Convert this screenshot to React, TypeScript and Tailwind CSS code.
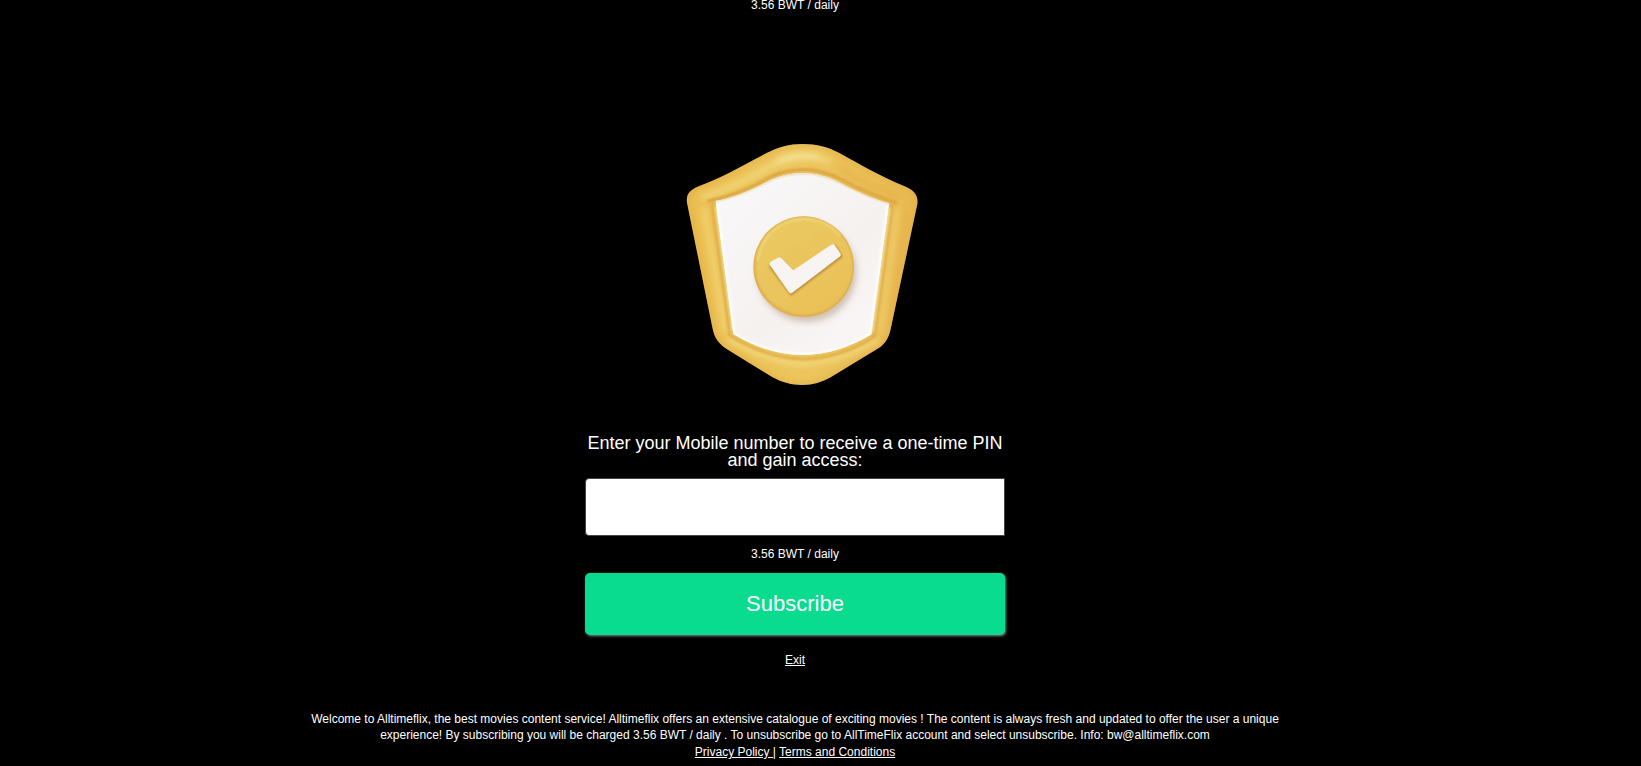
import { useState } from "react";

const PRICE = "3.56 BWT / daily";

const OUTER =
  "M397 42C358 42 326 51 290 69C222 104 158 142 88 168C62 178 47 192 51 218L127 592C132 622 146 642 170 657L308 742C338 758 365 765 397 765C430 765 455 757 482 742L625 655C648 641 658 620 663 592L742 222C746 192 728 178 700 167C634 141 572 104 508 69C474 51 440 42 397 42Z";

const INNER =
  "M137 213C195 202 250 177 300 151C335 135 365 130 400 130C440 130 475 140 510 158C560 184 605 205 657 220L604 613C540 653 470 674 400 675C320 674 250 649 190 612Z";

const ShieldIcon = () => (
  <svg
    viewBox="-30 0 810 810"
    className="size-[270px]"
    fill="none"
    aria-hidden="true"
  >
    <defs>
      <linearGradient id="gold" x1="50" y1="0" x2="742" y2="0" gradientUnits="userSpaceOnUse">
        <stop offset="0" stopColor="#ebbd4f" />
        <stop offset="0.5" stopColor="#ecc55c" />
        <stop offset="1" stopColor="#e9b951" />
      </linearGradient>
      <linearGradient id="plate" x1="140" y1="130" x2="640" y2="670" gradientUnits="userSpaceOnUse">
        <stop offset="0" stopColor="#f9f8fa" />
        <stop offset="0.6" stopColor="#f5f1ef" />
        <stop offset="1" stopColor="#faf8f8" />
      </linearGradient>
      <linearGradient id="coin" x1="300" y1="270" x2="500" y2="550" gradientUnits="userSpaceOnUse">
        <stop offset="0" stopColor="#ebc962" />
        <stop offset="1" stopColor="#e9c057" />
      </linearGradient>
      <filter id="blur3" x="-20%" y="-20%" width="140%" height="140%">
        <feGaussianBlur stdDeviation="3" />
      </filter>
      <filter id="blur9" x="-20%" y="-20%" width="140%" height="140%">
        <feGaussianBlur stdDeviation="9" />
      </filter>
      <clipPath id="shield">
        <path d={OUTER} />
      </clipPath>
      <clipPath id="face">
        <path d={INNER} />
      </clipPath>
      <clipPath id="disc">
        <circle cx="401" cy="410" r="150" />
      </clipPath>
    </defs>

    {/* gold rim */}
    <path d={OUTER} fill="url(#gold)" />
    <g clipPath="url(#shield)">
      <path d={OUTER} stroke="#e0a946" strokeWidth="8" filter="url(#blur9)" />
      <g filter="url(#blur9)" strokeLinecap="round">
        <path
          d="M100 200C190 174 250 138 315 102C365 76 425 74 475 94"
          stroke="#f0d87c"
          strokeWidth="18"
        />
        <path d="M326 92C360 76 405 72 442 80" stroke="#f7e7a0" strokeWidth="14" />
        <path d="M102 238L166 600" stroke="#f1d473" strokeWidth="18" />
        <path d="M682 240L632 600" stroke="#efcf6e" strokeWidth="14" />
        <path
          d="M180 628C260 672 330 698 400 700C470 698 550 670 618 630"
          stroke="#f3da80"
          strokeWidth="16"
        />
        <path d="M510 116C570 152 625 180 690 202" stroke="#e6b24c" strokeWidth="12" />
        <path d="M708 240L656 590" stroke="#e6b04b" strokeWidth="10" />
      </g>
      <path
        d="M112 214C195 196 250 170 298 142C335 124 365 119 400 119C440 119 475 128 514 148C562 174 615 197 682 220"
        stroke="#d9a243"
        strokeWidth="8"
        filter="url(#blur3)"
      />
      <path
        d="M126 220L180 616C250 660 320 686 400 687C470 686 544 664 613 620L667 224"
        stroke="#dfac4a"
        strokeWidth="8"
        filter="url(#blur3)"
      />
      <path
        d="M140 230L191 602M605 606L656 234"
        stroke="#f3dc91"
        strokeWidth="12"
        filter="url(#blur3)"
      />
    </g>

    {/* white plate */}
    <path d={INNER} fill="url(#plate)" />
    <g clipPath="url(#face)">
      <path d={INNER} stroke="#ffffff" strokeWidth="12" filter="url(#blur3)" />
      <path
        d="M137 213C195 202 250 177 300 151C335 135 365 130 400 130C440 130 475 140 510 158C560 184 605 205 657 220"
        stroke="#dfcba4"
        strokeWidth="6"
        filter="url(#blur3)"
      />
      <circle cx="410" cy="427" r="149" fill="#b8a08e" opacity="0.6" filter="url(#blur9)" />
    </g>

    {/* coin */}
    <circle cx="401" cy="410" r="151" fill="#dfae4c" />
    <g clipPath="url(#disc)">
      <circle cx="402" cy="408" r="146" fill="url(#coin)" filter="url(#blur3)" />
      <path
        d="M264 392A140 140 0 0 1 510 316"
        stroke="#f2da84"
        strokeWidth="5"
        filter="url(#blur3)"
      />
    </g>
    <path
      d="M302 410L330 390L373 432L494 349L513 379L364 492Z"
      fill="#a8762c"
      stroke="#a8762c"
      strokeWidth="8"
      strokeLinejoin="round"
      opacity="0.7"
      filter="url(#blur3)"
    />
    <path
      d="M307 402L328 390L369 431L488 351L504 374L363 481Z"
      fill="#f8f4f2"
      stroke="#f8f4f2"
      strokeWidth="16"
      strokeLinejoin="round"
    />
  </svg>
);

const App = () => {
  const [phone, setPhone] = useState("");

  return (
    <div className="min-h-screen bg-black pr-[51px] font-['Liberation_Sans',Arial,sans-serif] text-xs text-white">
      <main className="flex flex-col items-center text-center">
        <p className="leading-[10px]">{PRICE}</p>

        <div className="mt-[120px]">
          <ShieldIcon />
        </div>

        <form
          className="mt-[35px] flex w-full max-w-[420px] flex-col items-center"
          onSubmit={(e) => e.preventDefault()}
        >
          <label htmlFor="phone" className="text-lg leading-[17px]">
            Enter your Mobile number to receive a one-time PIN and gain access:
          </label>
          <input
            id="phone"
            type="tel"
            value={phone}
            onChange={(e) => setPhone(e.target.value)}
            className="mt-[9px] h-[58px] w-full rounded-l-sm border border-[#444] bg-white px-3 text-center text-2xl text-black"
          />
          <p className="mt-[10px] leading-4">{PRICE}</p>
          <button
            type="submit"
            className="mt-[11px] h-[62px] w-full rounded-[5px] bg-[#09dc8f] text-[22px] text-white shadow-[1px_1px_3px_#888]"
          >
            Subscribe
          </button>
        </form>

        <a href="#exit" className="mt-[17px] leading-4 underline">
          Exit
        </a>

        <footer className="mt-[43px] w-full max-w-[980px] leading-4">
          <p>
            Welcome to Alltimeflix, the best movies content service! Alltimeflix
            offers an extensive catalogue of exciting movies ! The content is
            always fresh and updated to offer the user a unique experience! By
            subscribing you will be charged 3.56 BWT / daily . To unsubscribe go
            to AllTimeFlix account and select unsubscribe. Info:
            bw@alltimeflix.com
          </p>
          <p className="leading-[18px]">
            <a href="#privacy" className="underline">
              Privacy Policy |
            </a>{" "}
            <a href="#terms" className="underline">
              Terms and Conditions
            </a>
          </p>
        </footer>
      </main>
    </div>
  );
};

export default App;
